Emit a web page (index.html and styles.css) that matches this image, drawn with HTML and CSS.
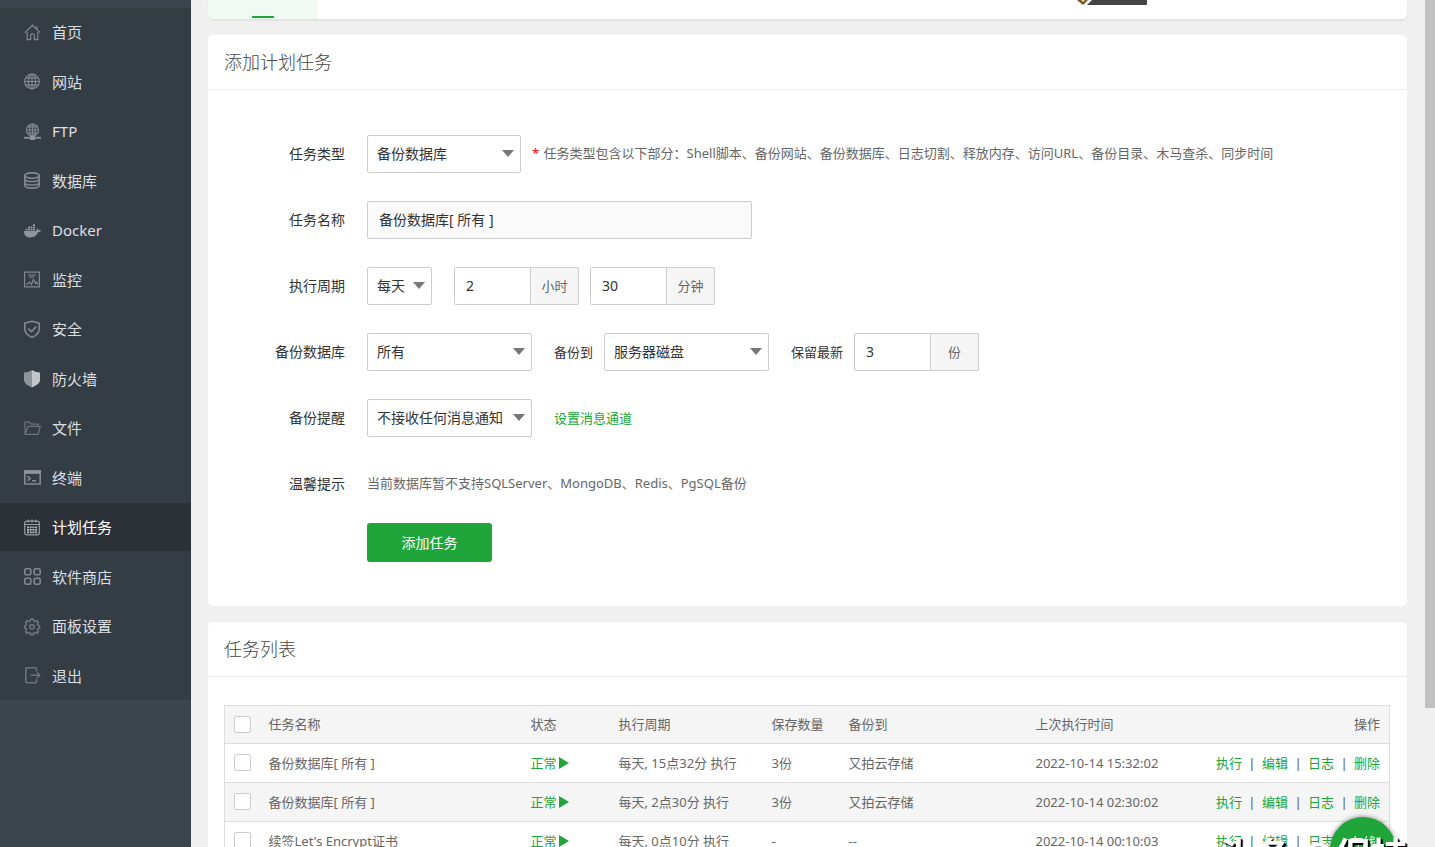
FILE: index.html
```html
<!DOCTYPE html>
<html lang="zh-CN">
<head>
<meta charset="utf-8">
<title>计划任务</title>
<link rel="stylesheet" href="styles.css">
</head>
<body>
<div class="layout">
  <nav class="sidebar">
    <ul class="menu">
      <li><a class="menu-item" href="#"><svg class="icon" viewBox="0 0 17 17"><path d="M.8 8.6 8.5 1.2l7.7 7.4M12.8 2.2v3M3.2 8v7.7h3.4v-4.2q0-1.6 1.9-1.6t1.9 1.6v4.2h3.4V8"/></svg>首页</a></li>
      <li><a class="menu-item" href="#"><svg class="icon" viewBox="0 0 17 17"><circle cx="8" cy="8.500" r="7.3"/><ellipse cx="8" cy="8.500" rx="3.6" ry="7.3"/><path d="M8 1.200v14.600M.7 8.500h14.600M2 4.800h12M2 12.200h12"/></svg>网站</a></li>
      <li><a class="menu-item" href="#"><svg class="icon" viewBox="0 0 17 17"><circle cx="8.5" cy="7" r="6"/><ellipse cx="8.5" cy="7" rx="2.8" ry="6"/><path d="M8.5 1v13M2.5 7h12M3.5 4h10M3.5 10h10"/><path class="thick" d="M0 14.8h17"/><path class="fill" d="M6 13h5v4H6z"/></svg>FTP</a></li>
      <li><a class="menu-item" href="#"><svg class="icon bold" viewBox="0 0 17 17"><ellipse cx="8" cy="3.600" rx="7.2" ry="2.7"/><path d="M.8 3.600v10c0 3.4 14.4 3.4 14.4 0v-10M.8 7c0 3.4 14.4 3.4 14.4 0M.8 10.400c0 3.4 14.4 3.4 14.4 0"/></svg>数据库</a></li>
      <li><a class="menu-item" href="#"><svg class="icon" viewBox="0 0 17 17"><path class="fill" d="M0 9h12.400c.5-1 .2-2 .6-2.800 1 .4 1.300 1.200 1.300 2 .9-.2 1.800-.1 2.700.4-.5 1.100-1.500 1.600-2.900 1.500C12.500 14 9.800 15.500 6 15.500 2 15.500 0 13.200 0 9zM1.500 6.700h2v1.700h-2zM4 6.700h2v1.700H4zM6.500 6.700h2v1.700h-2zM9 6.700h2v1.700H9zM4 4.500h2v1.700H4zM6.500 4.500h2v1.700h-2zM9 4.500h2v1.700H9zM9 2.300h2V4H9z"/></svg>Docker</a></li>
      <li><a class="menu-item" href="#"><svg class="icon" viewBox="0 0 17 17"><path d="M.6 1.200h14.800v14.600H.6zM4 4h8M5 6h5M2 13h2l1.500-2 2 2.500 2-5 2 4 1-1.500 1 2h1"/></svg>监控</a></li>
      <li><a class="menu-item" href="#"><svg class="icon bold" viewBox="0 0 17 17"><path d="M8 .3 15.200 2.200V8c0 4-3 6.600-7.200 8.500C3.800 14.600.8 12 .8 8V2.200zM4.300 7.600l3 3 5-5"/></svg>安全</a></li>
      <li><a class="menu-item" href="#"><svg class="icon" viewBox="0 0 17 17"><path class="light" d="M8 0c2.500 1.600 4.700 2.300 8 2.500V10c0 3.500-4 5.500-8 7.500z"/><path class="fill" d="M8 0C5.500 1.600 3.300 2.300 0 2.500V10c0 3.500 4 5.500 8 7.500z"/></svg>防火墙</a></li>
      <li><a class="menu-item" href="#"><svg class="icon dim" viewBox="0 0 17 17"><path d="M1.200 14.300.8 2.200h4.700l1.500 2h7v2M1.200 14.300l2.800-8h12.200l-2 8z"/></svg>文件</a></li>
      <li><a class="menu-item" href="#"><svg class="icon bold" viewBox="0 0 17 17"><path d="M.8 2h15.400v13H.8zM3.500 7.200l2.700 2.200-2.700 2.300M8 11.700h4"/><path class="fill" d="M0 1.300h17v3.500H0z"/></svg>终端</a></li>
      <li><a class="menu-item active" href="#"><svg class="icon" viewBox="0 0 17 17"><rect x=".7" y="2.200" width="14.600" height="13.600" rx="2"/><path d="M.7 5.500h14.600M4 .5v3M8 .5v3M12 .5v3"/><path class="fill" d="M3 7.500h2v1.700H3zM5.700 7.500h2v1.700h-2zM8.400 7.500h2v1.700h-2zM11.100 7.500h2v1.700h-2zM3 10h2v1.700H3zM5.700 10h2v1.700h-2zM8.400 10h2v1.700h-2zM11.100 10h2v1.700h-2zM3 12.500h2v1.700H3zM5.700 12.500h2v1.700h-2zM8.400 12.500h2v1.700h-2zM11.100 12.500h2v1.700h-2z"/></svg>计划任务</a></li>
      <li><a class="menu-item" href="#"><svg class="icon bold" viewBox="0 0 17 17"><rect x=".8" y=".8" width="6" height="6" rx="1.500"/><rect x="10.200" y=".8" width="6" height="6" rx="1.500"/><rect x=".8" y="10.200" width="6" height="6" rx="1.500"/><rect x="10.200" y="10.200" width="6" height="6" rx="1.500"/></svg>软件商店</a></li>
      <li><a class="menu-item" href="#"><svg class="icon dim bold" viewBox="0 0 17 17"><path d="M6.800 1h2.400l.5 2 1.300.6 1.800-1 1.600 1.600-1 1.800.6 1.300 1.600.5v2.400l-1.600.5-.6 1.300 1 1.800-1.600 1.600-1.800-1-1.300.6-.5 1.600H6.800l-.5-1.600-1.300-.6-1.800 1-1.600-1.600 1-1.800-.6-1.300-1.100-.5V7.800L2 7.300 2.600 6l-1-1.800 1.600-1.600 1.800 1L6.300 3z"/><circle cx="8" cy="8.800" r="2.200"/></svg>面板设置</a></li>
      <li><a class="menu-item" href="#"><svg class="icon dim bold" viewBox="0 0 17 17"><path d="M12.500 4.500V2q0-1.200-1.200-1.200H3Q1.800.8 1.800 2v12.500q0 1.200 1.200 1.200h8.300q1.200 0 1.200-1.200V12M6.500 8.300h9M13 5.500l2.700 2.800L13 11"/></svg>退出</a></li>
    </ul>
  </nav>

  <main class="main">
    <section class="card topbar">
      <div class="tab"></div>
      <svg class="badge" viewBox="0 0 70 5"><path fill="#76552b" d="M0 0h11L6 5z"/><path fill="#f5dfb8" d="M4 0h4L6 2z"/><path fill="#444" d="M15 0h55v4q0 1-1 1H10z"/></svg>
    </section>

    <section class="card">
      <h2 class="card-title">添加计划任务</h2>
      <form class="form">
        <div class="row">
          <label class="label" for="type">任务类型</label>
          <span class="select w-type"><select id="type"><option>备份数据库</option></select></span>
          <span class="hint near"><span class="star">*</span> 任务类型包含以下部分：Shell脚本、备份网站、备份数据库、日志切割、释放内存、访问URL、备份目录、木马查杀、同步时间</span>
        </div>
        <div class="row">
          <label class="label" for="name">任务名称</label>
          <input class="text name" id="name" type="text" value="备份数据库[ 所有 ]" readonly>
        </div>
        <div class="row">
          <label class="label" for="cycle">执行周期</label>
          <span class="select w-cycle"><select id="cycle"><option>每天</option></select></span>
          <span class="group far"><input class="text" id="hour" type="text" value="2"><label class="unit" for="hour">小时</label></span>
          <span class="group near"><input class="text" id="minute" type="text" value="30"><label class="unit" for="minute">分钟</label></span>
        </div>
        <div class="row">
          <label class="label" for="db">备份数据库</label>
          <span class="select w-wide"><select id="db"><option>所有</option></select></span>
          <label class="sub far" for="dest">备份到</label>
          <span class="select w-wide near"><select id="dest"><option>服务器磁盘</option></select></span>
          <label class="sub far" for="keep">保留最新</label>
          <span class="group near"><input class="text" id="keep" type="text" value="3"><label class="unit" for="keep">份</label></span>
        </div>
        <div class="row">
          <label class="label" for="notice">备份提醒</label>
          <span class="select w-wide"><select id="notice"><option>不接收任何消息通知</option></select></span>
          <a class="link far" href="#">设置消息通道</a>
        </div>
        <div class="row">
          <span class="label">温馨提示</span>
          <span class="hint">当前数据库暂不支持SQLServer、MongoDB、Redis、PgSQL备份</span>
        </div>
        <button class="submit" type="button">添加任务</button>
      </form>
    </section>

    <section class="card">
      <h2 class="card-title">任务列表</h2>
      <div class="table-wrap">
        <table class="table">
          <colgroup><col class="c-check"><col class="c-name"><col class="c-state"><col class="c-cycle"><col class="c-count"><col class="c-dest"><col class="c-time"><col></colgroup>
          <thead>
            <tr><th><input class="check" type="checkbox" aria-label="全选"></th><th>任务名称</th><th>状态</th><th>执行周期</th><th>保存数量</th><th>备份到</th><th>上次执行时间</th><th class="right">操作</th></tr>
          </thead>
          <tbody>
            <tr><td><input class="check" type="checkbox" aria-label="选择任务"></td><td>备份数据库[ 所有 ]</td><td><a class="state" href="#">正常<svg class="play" viewBox="0 0 10 12"><path d="M0 0v12l10-6z"/></svg></a></td><td>每天, 15点32分 执行</td><td>3份</td><td>又拍云存储</td><td>2022-10-14 15:32:02</td><td><div class="ops"><a href="#">执行</a><span>|</span><a href="#">编辑</a><span>|</span><a href="#">日志</a><span>|</span><a href="#">删除</a></div></td></tr>
            <tr><td><input class="check" type="checkbox" aria-label="选择任务"></td><td>备份数据库[ 所有 ]</td><td><a class="state" href="#">正常<svg class="play" viewBox="0 0 10 12"><path d="M0 0v12l10-6z"/></svg></a></td><td>每天, 2点30分 执行</td><td>3份</td><td>又拍云存储</td><td>2022-10-14 02:30:02</td><td><div class="ops"><a href="#">执行</a><span>|</span><a href="#">编辑</a><span>|</span><a href="#">日志</a><span>|</span><a href="#">删除</a></div></td></tr>
            <tr><td><input class="check" type="checkbox" aria-label="选择任务"></td><td>续签Let's Encrypt证书</td><td><a class="state" href="#">正常<svg class="play" viewBox="0 0 10 12"><path d="M0 0v12l10-6z"/></svg></a></td><td>每天, 0点10分 执行</td><td>-</td><td>--</td><td>2022-10-14 00:10:03</td><td><div class="ops"><a href="#">执行</a><span>|</span><a href="#">编辑</a><span>|</span><a href="#">日志</a><span>|</span><a href="#">删除</a></div></td></tr>
          </tbody>
        </table>
      </div>
    </section>
  </main>
  <div class="scrollbar"><div class="thumb"></div></div>
</div>
<button class="service" type="button">在线</button>
<div class="watermark">头条 @保持</div>
</body>
</html>
```
FILE: styles.css
```css
* { box-sizing: border-box; }
body {
  margin: 0;
  overflow: hidden;
  background: #f0f0f0;
  color: #666;
  font: 13px/20px "Noto Sans", "Noto Sans CJK SC", sans-serif;
}
a { color: #20a53a; text-decoration: none; }
.layout { display: flex; height: 100vh; overflow: hidden; }

.sidebar { flex: none; width: 191px; padding-top: 8px; background: #3c444d; }
.menu {
  display: flex;
  flex-direction: column;
  justify-content: space-between;
  height: 692px;
  margin: 0;
  padding: 0;
  list-style: none;
  background: #353d44;
}
.menu-item {
  display: flex;
  align-items: center;
  gap: 11px;
  height: 48px;
  padding-left: 24px;
  color: #dcdfe2;
  font-size: 15px;
}
.menu-item.active { background: #2c3138; color: #fff; }
.icon { width: 17px; height: 17px; fill: none; stroke: #82888d; stroke-width: 1.2; overflow: visible; }
.icon.bold { stroke-width: 1.6; }
.icon.dim { stroke: #6c7379; }
.icon .thick { stroke-width: 2; }
.icon .fill { fill: #90959a; stroke: none; }
.icon .light { fill: #c3c6c9; stroke: none; }
.active .icon { stroke: #999da1; }
.active .icon .fill { fill: #b5b8bb; }

.main { flex: 1; display: flex; flex-direction: column; gap: 16px; min-width: 0; padding: 0 18px 0 17px; }
.card { flex: none; background: #fff; border-radius: 5px; }
.topbar {
  display: flex;
  height: 19px;
  border-radius: 0 0 5px 5px;
  box-shadow: 0 2px 2px #e2e2e2;
}
.tab { display: flex; flex: none; width: 110px; justify-content: center; align-items: flex-end; padding-bottom: 1px; background: #f0f9f2; border-radius: 0 0 0 5px; }
.tab::after { content: ""; width: 22px; height: 2px; background: #20a53a; }
.badge { width: 70px; height: 5px; margin-left: auto; margin-right: 260px; }

.card-title {
  margin: 0;
  padding: 14px 16px;
  border-bottom: 1px solid #ececec;
  color: #444;
  font-size: 18px;
  font-weight: 300;
  line-height: 26px;
}
.form { display: flex; flex-direction: column; gap: 28px; padding: 45px 0 44px; }
.row { display: flex; align-items: center; height: 38px; }
.label { flex: none; width: 137px; margin-right: 22px; color: #333; font-size: 14px; text-align: right; }
.near { margin-left: 11px; }
.far { margin-left: 22px; }
.sub { color: #333; }
.hint { padding-bottom: 2px; white-space: nowrap; }
.star { margin-right: 1px; color: #f00; }

.select { position: relative; flex: none; height: 38px; }
.select::after {
  content: "";
  position: absolute;
  top: 15px;
  right: 7px;
  border: 6px solid transparent;
  border-top: 7px solid #777;
  border-bottom: 0;
  pointer-events: none;
}
.select select {
  width: 100%;
  height: 100%;
  padding: 0 0 0 9px;
  appearance: none;
  border: 1px solid #ccc;
  border-radius: 2px;
  background: #fff;
  color: #333;
  font: inherit;
  font-size: 14px;
}
.w-type { width: 154px; }
.w-cycle { width: 65px; }
.w-wide { width: 165px; }
.text {
  width: 77px;
  height: 38px;
  padding: 0 11px 2px;
  border: 1px solid #ccc;
  border-radius: 2px;
  color: #333;
  font: inherit;
  font-size: 14px;
}
.text.name { width: 385px; background: #fafafa; }
.group { display: flex; }
.group .text { border-radius: 2px 0 0 2px; }
.unit {
  width: 48px;
  border: 1px solid #ccc;
  border-left: 0;
  border-radius: 0 2px 2px 0;
  background: #f5f5f5;
  line-height: 36px;
  text-align: center;
}
.submit {
  width: 125px;
  height: 39px;
  margin: -8px 0 0 159px;
  border: 0;
  border-radius: 3px;
  background: #20a53a;
  color: #fff;
  font: inherit;
  font-size: 14px;
}

.table-wrap { padding: 28px 17px 28px 16px; }
.table { width: 100%; table-layout: fixed; border-collapse: collapse; border: 1px solid #ddd; }
.table th, .table td { height: 39px; padding: 0 9px 1px; border-bottom: 1px solid #ddd; font-weight: 400; text-align: left; white-space: nowrap; }
.table th { height: 38px; background: #f5f5f5; }
.table th.right { text-align: right; }
.table tbody tr:nth-child(even) { background: #f5f5f5; }
.c-check { width: 35px; }
.c-name { width: 262px; }
.c-state { width: 88px; }
.c-cycle { width: 153px; }
.c-count { width: 77px; }
.c-dest { width: 187px; }
.c-time { width: 170px; }
.check {
  display: block;
  width: 17px;
  height: 17px;
  margin: 0;
  appearance: none;
  border: 1px solid #ccc;
  border-radius: 2px;
  background: #fff;
}
.state { display: flex; align-items: center; gap: 2px; }
.play { width: 10px; height: 12px; fill: #20a53a; }
.ops { display: flex; justify-content: flex-end; }
.ops span { width: 20px; color: #555; text-align: center; }

.scrollbar { flex: none; width: 10px; background: #f0f0f0; }
.thumb { height: 708px; background: #c1c1c1; }
.service {
  position: fixed;
  right: 39px;
  bottom: -36px;
  width: 66px;
  height: 66px;
  padding: 0 0 16px;
  border: 0;
  border-radius: 50%;
  background: #20a53a;
  box-shadow: 0 0 5px #777;
  color: #fff;
  font: inherit;
}
.watermark {
  position: fixed;
  right: 27px;
  bottom: -33px;
  color: #fff;
  font-size: 37px;
  font-weight: 700;
  line-height: 48px;
  text-shadow: 1px 1px 1px #000, 2px 2px 1px #000;
  white-space: nowrap;
}
```
